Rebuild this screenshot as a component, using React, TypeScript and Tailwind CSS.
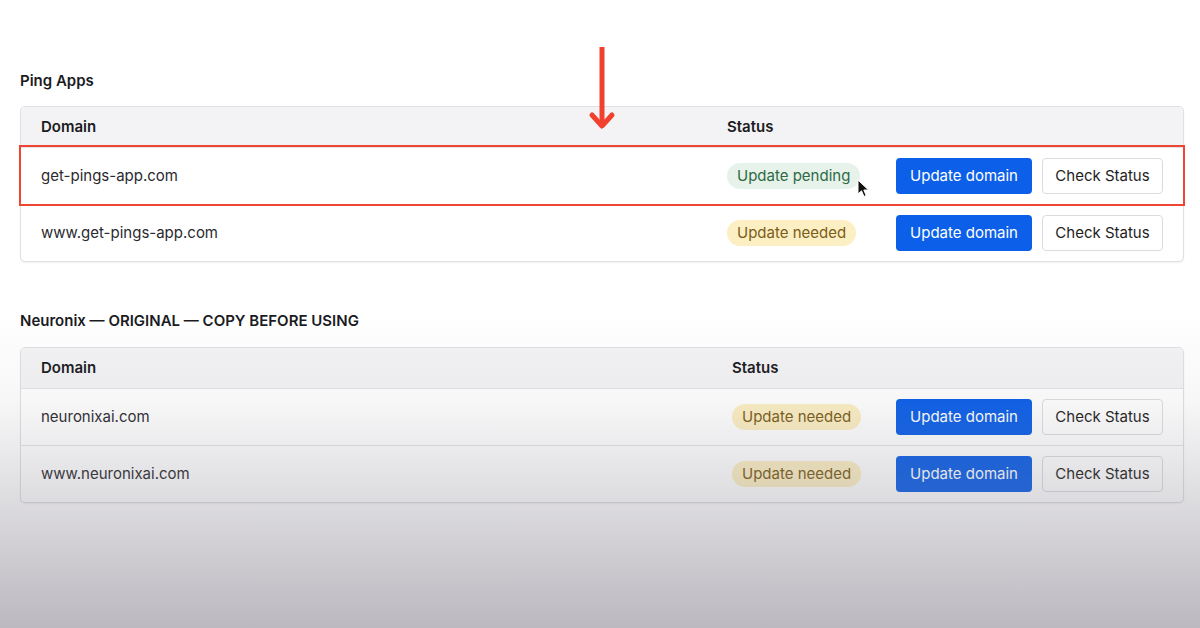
import React from 'react';

type Row = { domain: string; status: 'pending' | 'needed'; highlight?: boolean };

const pingRows: Row[] = [
  { domain: 'get-pings-app.com', status: 'pending', highlight: true },
  { domain: 'www.get-pings-app.com', status: 'needed' },
];

const neuronixRows: Row[] = [
  { domain: 'neuronixai.com', status: 'needed' },
  { domain: 'www.neuronixai.com', status: 'needed' },
];

const Badge = ({ status }: { status: Row['status'] }) =>
  status === 'pending' ? (
    <span className="inline-flex h-[26px] items-center rounded-full bg-[#e6f2ea] px-2.5 text-[15px] text-[#2e6a45]">
      Update pending
    </span>
  ) : (
    <span className="inline-flex h-[26px] items-center rounded-full bg-[#fcefc3] px-2.5 text-[15px] text-[#7a5d18]">
      Update needed
    </span>
  );

const DomainTable = ({ rows, statusCol }: { rows: Row[]; statusCol: string }) => (
  <div className="rounded-[5px] border border-[#e0e0e3] bg-white shadow-[0_1px_2px_rgba(0,0,0,0.06)]">
    <div className="flex h-10 items-center rounded-t-[5px] bg-[#f3f3f5] px-5 text-[15px] font-semibold text-[#1b1b1f]">
      <div className="flex-1">Domain</div>
      <div className={statusCol}>Status</div>
      <div className="w-[267px]" />
    </div>
    {rows.map((r) => (
      <div
        key={r.domain}
        className={`relative flex h-[57px] items-center border-t border-[#e4e4e7] px-5 text-[15px] text-[#2a2a2e] ${
          r.highlight ? 'z-10 outline-2 outline-solid outline-[#ef4634]' : ''
        }`}
      >
        <div className="flex-1">{r.domain}</div>
        <div className={statusCol}>
          <Badge status={r.status} />
        </div>
        <div className="flex w-[267px] items-center gap-2.5">
          <button className="h-9 w-[136px] rounded-[4px] bg-[#0c5fe8] text-[15px] text-white">Update domain</button>
          <button className="h-9 w-[121px] rounded-[4px] border border-[#dcdce0] bg-white text-[15px] text-[#1e1e22]">
            Check Status
          </button>
        </div>
        {r.highlight && (
          <svg className="absolute left-[836px] top-[31px]" width="14" height="20" viewBox="0 0 14 20">
            <path d="M1 1 L1 15 L4.5 11.8 L7 17.5 L9.2 16.5 L6.8 11 L11.5 11 Z" fill="#111" stroke="#fff" strokeWidth="1" />
          </svg>
        )}
      </div>
    ))}
  </div>
);

const App: React.FC = () => {
  return (
    <div className="relative h-[628px] w-[1200px] overflow-hidden bg-white font-['Inter','Liberation_Sans',sans-serif]">
      <div className="pt-[71px] pr-4 pl-5">
        <h2 className="mb-[15px] text-[15px] leading-5 font-semibold text-[#1b1b1f]">Ping Apps</h2>
        <DomainTable rows={pingRows} statusCol="w-[169px]" />
        <h2 className="mt-[49px] mb-[16px] text-[15px] leading-5 font-semibold text-[#1b1b1f]">
          Neuronix — ORIGINAL — COPY BEFORE USING
        </h2>
        <DomainTable rows={neuronixRows} statusCol="w-[164px]" />
      </div>

      {/* red annotation arrow */}
      <svg className="pointer-events-none absolute left-[588px] top-[46px]" width="28" height="86" viewBox="0 0 28 86">
        <path d="M14 1 L14 80" stroke="#f2402f" strokeWidth="5" />
        <path d="M4 69 L14 80 L24 69" stroke="#f2402f" strokeWidth="5" fill="none" strokeLinecap="round" strokeLinejoin="round" />
      </svg>

      {/* video fade */}
      <div className="pointer-events-none absolute inset-0 bg-[linear-gradient(to_bottom,transparent_50%,rgba(120,115,128,0.06)_64%,rgba(120,115,128,0.26)_80%,rgba(120,115,128,0.5))]" />
    </div>
  );
};

export default App;
